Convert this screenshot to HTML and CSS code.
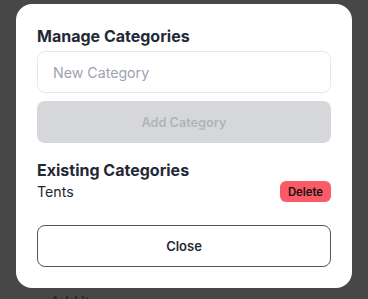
FILE: index.html
```html
<!DOCTYPE html>
<html lang="en">
<head>
<meta charset="utf-8">
<title>Manage Categories</title>
<link rel="stylesheet" href="styles.css">
</head>
<body>
<div class="backdrop">
  <div class="behind">Add Item</div>
  <div class="modal">
    <h2 class="title">Manage Categories</h2>
    <input class="field" type="text" placeholder="New Category">
    <button class="btn-add" disabled>Add Category</button>
    <h3 class="subtitle">Existing Categories</h3>
    <div class="row">
      <span class="name">Tents</span>
      <button class="btn-delete">Delete</button>
    </div>
    <button class="btn-close">Close</button>
  </div>
</div>
</body>
</html>
```

FILE: styles.css
```css
* { box-sizing: border-box; }
html, body { margin: 0; padding: 0; }
body {
  font-family: Inter, "Liberation Sans", sans-serif;
  background: #474747;
  width: 368px;
  height: 299px;
  overflow: hidden;
}
.backdrop {
  position: relative;
  height: 299px;
  padding-top: 4px;
  display: flex;
  justify-content: center;
  align-items: flex-start;
}
.behind {
  position: absolute;
  left: 50px;
  top: 293px;
  font-size: 14px;
  font-weight: 600;
  color: #2a2a2a;
}
.modal {
  position: relative;
  width: 336px;
  background: #ffffff;
  border-radius: 16px;
  padding: 21px 21px 21px;
  display: flex;
  flex-direction: column;
}
.title {
  margin: 0;
  font-size: 16px;
  line-height: 22px;
  font-weight: 700;
  color: #1f2937;
  margin-bottom: 4px;
}
.field {
  height: 42px;
  border: 1px solid #e5e7eb;
  border-radius: 8px;
  padding: 0 15px;
  font-family: inherit;
  font-size: 14.2px;
  color: #1f2937;
  outline: none;
}
.field::placeholder { color: #9ca3af; }
.btn-add {
  margin-top: 8px;
  height: 42px;
  border: none;
  border-radius: 8px;
  background: #d5d7db;
  color: #b0b3b9;
  font-family: inherit;
  font-size: 12.7px;
  font-weight: 600;
}
.subtitle {
  margin: 16px 0 0;
  font-size: 16px;
  line-height: 22px;
  font-weight: 700;
  color: #1f2937;
}
.row {
  display: flex;
  align-items: center;
  justify-content: space-between;
  margin-top: 0;
}
.name {
  font-size: 14.2px;
  color: #1f2937;
}
.btn-delete {
  height: 21px;
  padding: 0 8px;
  border: none;
  border-radius: 6px;
  background: #fc5a66;
  color: #111111;
  font-family: inherit;
  font-size: 11.3px;
  font-weight: 600;
}
.btn-close {
  margin-top: 23px;
  height: 42px;
  border: 1px solid #4b5563;
  border-radius: 8px;
  background: #ffffff;
  color: #1f2937;
  font-family: inherit;
  font-size: 13px;
  font-weight: 600;
}
```
